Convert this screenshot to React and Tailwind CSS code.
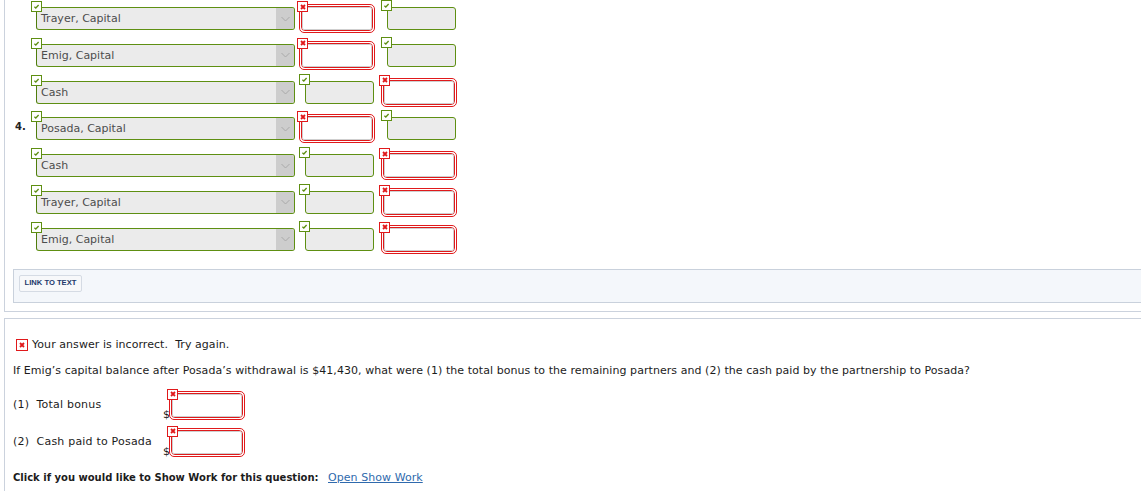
import React from "react";

const GREEN = "border-[#5e8f12]";
const RED = "border-[#e0191b]";

const ROWS = [
  { account: "Trayer, Capital", debit: "red", credit: "green" },
  { account: "Emig, Capital", debit: "red", credit: "green" },
  { account: "Cash", debit: "green", credit: "red" },
  { account: "Posada, Capital", debit: "red", credit: "green", num: "4." },
  { account: "Cash", debit: "green", credit: "red" },
  { account: "Trayer, Capital", debit: "green", credit: "red" },
  { account: "Emig, Capital", debit: "green", credit: "red" },
];

function CheckBadge({ className = "" }) {
  return (
    <span className={`absolute w-[11px] h-[11px] border ${GREEN} bg-white flex items-center justify-center ${className}`}>
      <svg width="9" height="9" viewBox="0 0 9 9">
        <polyline points="2.4,4.8 3.8,6 6.6,3" fill="none" stroke="#5e8f12" strokeWidth="1.3" />
      </svg>
    </span>
  );
}

function CrossBadge({ className = "", size = "w-[11px] h-[11px]" }) {
  return (
    <span className={`absolute ${size} border ${RED} bg-white flex items-center justify-center ${className}`}>
      <svg width="8" height="8" viewBox="0 0 8 8">
        <path d="M2 2 L6 6 M6 2 L2 6" stroke="#e0191b" strokeWidth="1.8" />
      </svg>
    </span>
  );
}

// wrong answer: double red outline round an empty white input
function RedInput({ badgeClass = "-left-[3px] -top-[4px]" }) {
  return (
    <div className={`relative w-[76px] h-[29px] rounded-[5px] border ${RED} bg-white p-px`}>
      <div className={`h-full rounded-[4px] border ${RED}`}>
        <div className="h-full rounded-[2px] border border-[#cfcfcf] bg-white" />
      </div>
      <CrossBadge className={badgeClass} />
    </div>
  );
}

function Cell({ kind }) {
  if (kind === "red") {
    return (
      <div className="relative w-[78px] pt-[4px]">
        <RedInput />
      </div>
    );
  }
  return (
    <div className="relative w-[78px] pt-[7px]">
      <CheckBadge className="left-0 top-0" />
      <div className={`ml-[6px] w-[69px] h-[23px] rounded-[3px] border ${GREEN} bg-[#ebebeb]`} />
    </div>
  );
}

function AccountSelect({ value }) {
  return (
    <div className={`relative mt-[7px] w-[259px] h-[23px] rounded-[3px] border ${GREEN} border-l-[#4f7d0c] bg-[#ebebeb] flex items-center`}>
      <span className="flex-1 pl-[4px] text-[11px] leading-none text-[#4d4d4d] whitespace-nowrap">{value}</span>
      <span className="w-[18px] h-[21px] bg-[#cdcdcd] rounded-r-[2px] flex items-center justify-center">
        <svg width="9" height="6" viewBox="0 0 9 6">
          <polyline points="0.5,1 4.5,5 8.5,1" fill="none" stroke="#a9a9a9" strokeWidth="1" />
        </svg>
      </span>
      <CheckBadge className="-left-[6px] -top-[7px]" />
    </div>
  );
}

export default function App() {
  return (
    <div
      className="w-[1141px] h-[491px] overflow-hidden bg-white text-[#1c1c1c]"
      style={{ fontFamily: '"DejaVu Sans", Verdana, sans-serif' }}
    >
      {/* journal entry panel */}
      <div className="ml-[4px] w-[1200px] border-l border-b border-[#cbd2dd] pb-[8px]">
        {ROWS.map((r, i) => (
          <div key={i} className="h-[36.8px] flex items-start">
            <div className="w-[31px] pl-[10px] mt-[11px] text-[10px] leading-[12px] font-bold text-[#222]">
              {r.num || ""}
            </div>
            <AccountSelect value={r.account} />
            <div className="ml-[4px]">
              <Cell kind={r.debit} />
            </div>
            <div className="ml-[4px]">
              <Cell kind={r.credit} />
            </div>
          </div>
        ))}
        <div className="mt-[11px] ml-[8px] h-[34px] border border-r-0 border-[#c9d1dc] bg-[#f4f7fb] pl-[5px] pt-[5px]">
          <button
            type="button"
            className="w-[63px] h-[17px] rounded-[2px] border border-[#d5dbe4] bg-[#f7f8fa] text-[7.6px] font-bold text-[#24386a] flex items-center justify-center whitespace-nowrap"
            style={{ fontFamily: '"Liberation Sans", Arial, sans-serif' }}
          >
            LINK TO TEXT
          </button>
        </div>
      </div>

      {/* feedback panel */}
      <div className="mt-[6px] ml-[4px] w-[1200px] h-[200px] border-l border-t border-[#cbd2dd] pl-[8px] text-[11px] tracking-[0.06px]">
        <div className="pt-[20px] pl-[3px] flex items-center gap-[4px] h-[32px]">
          <span className="relative w-[12px] h-[12px]">
            <CrossBadge size="w-[12px] h-[12px]" className="left-0 top-0" />
          </span>
          <span className="leading-[12px]">Your answer is incorrect.&nbsp; Try again.</span>
        </div>
        <p className="mt-[13px] leading-[14px] whitespace-nowrap">
          If Emig’s capital balance after Posada’s withdrawal is $41,430, what were (1) the total bonus to the remaining partners and (2) the cash paid by the partnership to Posada?
        </p>
        <div className="mt-[13px] flex items-center h-[29px]">
          <span className="w-[150px] leading-[14px] tracking-[0.2px]">(1)&nbsp; Total bonus</span>
          <span className="w-[6px] self-end leading-[12px] mb-[-1px]">$</span>
          <RedInput badgeClass="-left-[3px] -top-[3px]" />
        </div>
        <div className="mt-[8px] flex items-center h-[29px]">
          <span className="w-[150px] leading-[14px] tracking-[0.2px]">(2)&nbsp; Cash paid to Posada</span>
          <span className="w-[6px] self-end leading-[12px] mb-[-1px]">$</span>
          <RedInput badgeClass="-left-[3px] -top-[3px]" />
        </div>
        <div className="mt-[14px] flex items-center leading-[14px]">
          <span className="w-[315px] text-[10px] font-bold whitespace-nowrap tracking-normal">Click if you would like to Show Work for this question:</span>
          <a href="#" className="text-[#2f6aad] underline">Open Show Work</a>
        </div>
      </div>
    </div>
  );
}
